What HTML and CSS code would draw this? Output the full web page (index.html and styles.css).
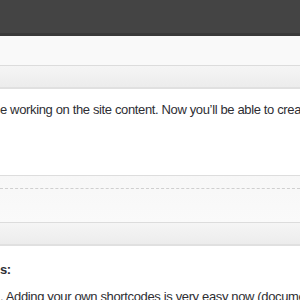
FILE: index.html
```html
<!DOCTYPE html>
<html>
<head>
<meta charset="utf-8">
<link rel="stylesheet" href="styles.css">
</head>
<body>
<div class="page">
  <div class="topbar"></div>
  <div class="subbar"></div>
  <div class="toolbar"></div>
  <div class="content">
    <p class="line first">e working on the site content. Now you’ll be able to create great content</p>
  </div>
  <div class="panel">
    <div class="dashed"></div>
  </div>
  <div class="toolbar second"></div>
  <div class="content two">
    <p class="line bold">s:</p>
    <p class="line last">. Adding your own shortcodes is very easy now (documentation)</p>
  </div>
</div>
</body>
</html>
```
FILE: styles.css
```css
html, body {
  margin: 0;
  padding: 0;
  background: #fff;
}
.page {
  width: 300px;
  height: 300px;
  overflow: hidden;
  font-family: "Liberation Sans", Arial, sans-serif;
  font-size: 13px;
  letter-spacing: -0.36px;
  color: #2e2e33;
}
.topbar {
  height: 33px;
  background: #444;
  border-bottom: 3px solid #393939;
  box-shadow: 0 1px 2px rgba(0,0,0,0.25);
}
.subbar {
  height: 29px;
  background: #f9f9f9;
  border-bottom: 1px solid #dcdcdc;
}
.toolbar {
  height: 21px;
  background: linear-gradient(#f5f5f5, #ececec);
  border-bottom: 2px solid #e0e0e0;
}
.content {
  background: #fff;
  height: 86px;
  overflow: hidden;
}
.line {
  margin: 0;
  white-space: nowrap;
  line-height: 15px;
}
.first {
  padding-top: 13px;
}
.panel {
  border-top: 1px solid #dddddd;
  background: linear-gradient(#f7f7f7, #fafafa);
  height: 46px;
}
.dashed {
  margin-top: 12px;
  border-top: 1px dashed #cfcfcf;
}
.second {
  border-top: 1px solid #dcdcdc;
  height: 21px;
}
.two {
  height: 60px;
}
.bold {
  font-weight: bold;
  padding-top: 16px;
}
.last {
  padding-top: 12px;
}
```
